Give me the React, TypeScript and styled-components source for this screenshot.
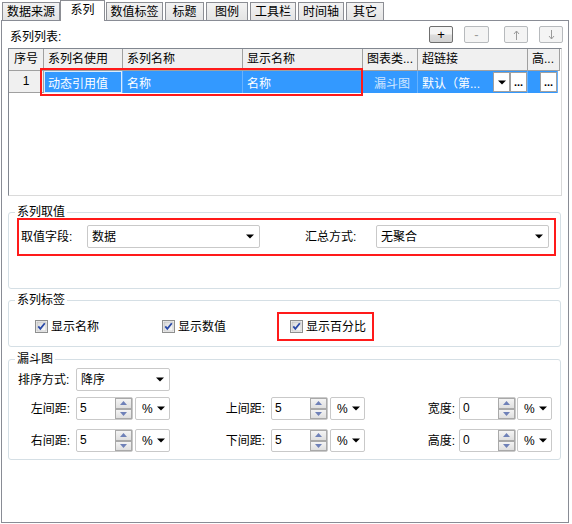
import React from 'react';
import styled, { createGlobalStyle } from 'styled-components';

const GlobalStyle = createGlobalStyle`
  html, body {
    margin: 0;
    padding: 0;
    background: #ffffff;
  }
  body {
    font-family: "Liberation Sans", "Noto Sans CJK SC", sans-serif;
    font-size: 12px;
    color: #000000;
  }
`;

const Window = styled.div`
  width: 572px;
  height: 524px;
  background: #ffffff;
  overflow: hidden;
`;

const TabStrip = styled.div`
  position: relative;
  z-index: 1;
  display: flex;
  align-items: flex-end;
  height: 20px;
  padding-left: 2px;
`;

const Tab = styled.div<{ $w: number; $active?: boolean }>`
  box-sizing: border-box;
  width: ${(p) => p.$w}px;
  height: ${(p) => (p.$active ? 21 : 18)}px;
  margin: 0 ${(p) => (p.$active ? 1 : 2)}px ${(p) => (p.$active ? -1 : 0)}px
    ${(p) => (p.$active ? -2 : 0)}px;
  border: 1px solid #8c8e94;
  border-bottom: none;
  background: ${(p) =>
    p.$active ? '#ffffff' : 'linear-gradient(#f3f3f3, #e4e4e4)'};
  display: flex;
  align-items: center;
  justify-content: center;
  line-height: 14px;
  white-space: nowrap;
  padding-bottom: ${(p) => (p.$active ? 2 : 0)}px;
`;

const Panel = styled.div`
  box-sizing: border-box;
  width: 568px;
  height: 503px;
  margin-left: 1px;
  border: 1px solid #898c95;
  background: #ffffff;
  padding: 4px 5px 0 6px;
`;

const ListHeader = styled.div`
  display: flex;
  align-items: flex-start;
  height: 23px;
`;

const Caption = styled.span<{ $w?: number; $right?: boolean }>`
  display: inline-block;
  flex: none;
  width: ${(p) => (p.$w ? `${p.$w}px` : 'auto')};
  text-align: ${(p) => (p.$right ? 'right' : 'left')};
  line-height: 14px;
  white-space: nowrap;
`;

const ListTitle = styled(Caption)`
  margin-top: 5px;
  margin-left: 2px;
`;

const ToolButton = styled.div<{ $gap: number; $w: number; $enabled?: boolean }>`
  box-sizing: border-box;
  width: ${(p) => p.$w}px;
  height: 17px;
  margin-top: 1px;
  margin-left: ${(p) => p.$gap}px;
  border: 1px solid ${(p) => (p.$enabled ? '#6f6f6f' : '#b7babd')};
  border-radius: 2px;
  background: ${(p) =>
    p.$enabled ? 'linear-gradient(#f4f4f4 45%, #dcdcdc 55%, #d2d2d2)' : '#f4f4f4'};
  color: ${(p) => (p.$enabled ? '#000' : '#9a9a9a')};
  display: flex;
  align-items: center;
  justify-content: center;
  font-size: 13px;
  line-height: 13px;
`;

const Spacer = styled.div`
  flex: 1;
`;

const Table = styled.div`
  position: relative;
  box-sizing: border-box;
  width: 554px;
  height: 148px;
  border: 1px solid;
  border-color: #828790 #dadada #dadada #828790;
  background: #ffffff;
`;

const TableRow = styled.div`
  display: flex;
  height: 22px;
`;

const HeadCell = styled.div<{ $w: number; $center?: boolean }>`
  box-sizing: border-box;
  flex: none;
  width: ${(p) => p.$w}px;
  padding: 0 4px;
  border-right: 1px solid #a0a0a0;
  border-bottom: 1px solid #a0a0a0;
  background: #f0f0f0;
  line-height: 21px;
  text-align: ${(p) => (p.$center ? 'center' : 'left')};
  white-space: nowrap;
  overflow: hidden;
`;

const IndexCell = styled(HeadCell)`
  padding: 0 3px;
`;

const DataCell = styled.div<{ $w: number; $focus?: boolean; $dim?: boolean }>`
  box-sizing: border-box;
  flex: none;
  width: ${(p) => p.$w}px;
  display: flex;
  align-items: center;
  padding-left: 4px;
  background: #3399ff;
  color: ${(p) => (p.$dim ? '#cfe6ff' : '#ffffff')};
  justify-content: ${(p) => (p.$dim ? 'center' : 'flex-start')};
  border-right: 1px solid rgba(255, 255, 255, 0.25);
  box-shadow: ${(p) => (p.$focus ? 'inset 0 0 0 1px #d8ecff' : 'none')};
  white-space: nowrap;
  overflow: hidden;
`;

const CellText = styled.span`
  flex: 1;
  overflow: hidden;
`;

const CellButton = styled.div`
  box-sizing: border-box;
  flex: none;
  width: 17px;
  height: 20px;
  border: 1px solid #a0a0a0;
  background: #ffffff;
  color: #000000;
  display: flex;
  align-items: center;
  justify-content: center;
  font-size: 11px;
  line-height: 11px;
  font-weight: bold;
`;

const Marker = styled.div`
  position: absolute;
  left: 31px;
  top: 19px;
  width: 323px;
  height: 28px;
  box-sizing: border-box;
  border: 2px solid #ff1a1a;
  pointer-events: none;
`;

const Group = styled.fieldset<{ $top: number }>`
  box-sizing: border-box;
  width: 553px;
  margin: ${(p) => p.$top}px 0 0 0;
  padding: 0;
  border: 1px solid #d5dfe5;
  border-radius: 3px;
  min-width: 0;
`;

const Legend = styled.legend`
  margin-left: 6px;
  padding: 0 2px;
  font-size: 12px;
  line-height: 14px;
`;

const Highlight = styled.div`
  box-sizing: border-box;
  border: 2px solid #ff1a1a;
`;

const ValueHighlight = styled(Highlight)`
  display: flex;
  align-items: center;
  width: 539px;
  height: 38px;
  margin: -1px 0 32px 8px;
  padding: 0 5px 1px 2px;
`;

const Combo = styled.div<{ $w: number; $gap?: number }>`
  box-sizing: border-box;
  flex: none;
  width: ${(p) => p.$w}px;
  height: 23px;
  margin-left: ${(p) => p.$gap ?? 0}px;
  border: 1px solid #c9c9c9;
  border-radius: 2px;
  background: #ffffff;
  display: flex;
  align-items: center;
  padding: 0 5px 0 4px;
`;

const ComboText = styled.span`
  flex: 1;
  line-height: 14px;
  white-space: nowrap;
`;

const CheckRow = styled.div`
  display: grid;
  grid-template-columns: 127px 115px auto;
  align-items: center;
  height: 29px;
  margin: 5px 0 5px 26px;
`;

const CheckItem = styled.label`
  display: flex;
  align-items: center;
  gap: 3px;
  line-height: 14px;
  white-space: nowrap;
`;

const PercentHighlight = styled(Highlight)`
  display: flex;
  align-items: center;
  width: 97px;
  height: 29px;
  padding-left: 11px;
`;

const FormRow = styled.div<{ $top: number; $bottom?: number }>`
  display: flex;
  align-items: center;
  height: 23px;
  margin: ${(p) => p.$top}px 0 ${(p) => p.$bottom ?? 0}px 0;
`;

const SortCaption = styled(Caption)`
  margin-left: 9px;
`;

const Field = styled.div`
  display: flex;
  align-items: center;
`;

const FieldCaption = styled(Caption)<{ $gap: number }>`
  margin-right: ${(p) => p.$gap}px;
`;

const SpinBox = styled.div`
  box-sizing: border-box;
  display: flex;
  width: 57px;
  height: 23px;
  padding: 0 0 0 3px;
  border: 1px solid #c9c9c9;
  border-radius: 2px;
  background: #ffffff;
`;

const SpinValue = styled.span`
  flex: 1;
  padding-top: 3px;
  line-height: 14px;
`;

const SpinButtons = styled.div`
  display: flex;
  flex-direction: column;
  width: 17px;
`;

const SpinButton = styled.div`
  box-sizing: border-box;
  flex: 1;
  border: 1px solid #a9a9a9;
  background: linear-gradient(#f4f4f4, #dfdfdf);
  display: flex;
  align-items: center;
  justify-content: center;
`;

const UnitCombo = styled(Combo)`
  padding: 0 4px 0 6px;
`;

const Caret = () => (
  <svg width="8" height="5" viewBox="0 0 8 5">
    <path d="M0 0.5h8L4 4.5z" fill="#000" />
  </svg>
);

const Arrow = ({ up }: { up?: boolean }) => (
  <svg width="7" height="10" viewBox="0 0 7 10">
    {up ? (
      <path d="M3.5 1v9M1 4l2.5-3L6 4" stroke="#9a9a9a" fill="none" strokeWidth="1" />
    ) : (
      <path d="M3.5 0v9M1 6l2.5 3L6 6" stroke="#9a9a9a" fill="none" strokeWidth="1" />
    )}
  </svg>
);

const SpinGlyph = ({ up }: { up?: boolean }) => (
  <svg width="7" height="4" viewBox="0 0 7 4">
    {up ? <path d="M0 4h7L3.5 0z" fill="#6f81b8" /> : <path d="M0 0h7L3.5 4z" fill="#6f81b8" />}
  </svg>
);

const CheckBox = () => (
  <svg width="13" height="13" viewBox="0 0 13 13">
    <defs>
      <linearGradient id="cbg" x1="0" y1="0" x2="1" y2="1">
        <stop offset="0" stopColor="#d6d6d6" />
        <stop offset="1" stopColor="#ffffff" />
      </linearGradient>
    </defs>
    <rect x="0.5" y="0.5" width="12" height="12" fill="#f4f4f4" stroke="#8e8f8f" />
    <rect x="2" y="2" width="9" height="9" fill="url(#cbg)" stroke="#b5b5b5" strokeWidth="0.6" />
    <path d="M3.3 6.4l2 2.4L9.8 3.2" stroke="#2a4aa8" strokeWidth="1.8" fill="none" />
  </svg>
);

const tabs = [
  { label: '数据来源', w: 58 },
  { label: '系列', w: 45, active: true },
  { label: '数值标签', w: 57 },
  { label: '标题', w: 39 },
  { label: '图例', w: 42 },
  { label: '工具栏', w: 46 },
  { label: '时间轴', w: 46 },
  { label: '其它', w: 38 },
];

const columns = [
  { label: '序号', w: 35, center: true },
  { label: '系列名使用', w: 79 },
  { label: '系列名称', w: 120 },
  { label: '显示名称', w: 120 },
  { label: '图表类...', w: 55 },
  { label: '超链接', w: 110 },
  { label: '高...', w: 32 },
];

interface MarginFieldProps {
  label: string;
  value: string;
  labelWidth: number;
  gap: number;
  unitGap: number;
}

function MarginField({ label, value, labelWidth, gap, unitGap }: MarginFieldProps) {
  return (
    <Field>
      <FieldCaption $w={labelWidth} $right $gap={gap}>
        {label}
      </FieldCaption>
      <SpinBox>
        <SpinValue>{value}</SpinValue>
        <SpinButtons>
          <SpinButton>
            <SpinGlyph up />
          </SpinButton>
          <SpinButton>
            <SpinGlyph />
          </SpinButton>
        </SpinButtons>
      </SpinBox>
      <UnitCombo $w={35} $gap={unitGap}>
        <ComboText>%</ComboText>
        <Caret />
      </UnitCombo>
    </Field>
  );
}

export default function App() {
  return (
    <Window>
      <GlobalStyle />
      <TabStrip>
        {tabs.map((t) => (
          <Tab key={t.label} $w={t.w} $active={t.active}>
            {t.label}
          </Tab>
        ))}
      </TabStrip>
      <Panel>
        <ListHeader>
          <ListTitle>系列列表:</ListTitle>
          <Spacer />
          <ToolButton $gap={0} $w={24} $enabled>
            +
          </ToolButton>
          <ToolButton $gap={11} $w={25}>
            -
          </ToolButton>
          <ToolButton $gap={15} $w={24}>
            <Arrow up />
          </ToolButton>
          <ToolButton $gap={11} $w={24}>
            <Arrow />
          </ToolButton>
        </ListHeader>

        <Table>
          <TableRow>
            {columns.map((c) => (
              <HeadCell key={c.label} $w={c.w} $center={c.center}>
                {c.label}
              </HeadCell>
            ))}
          </TableRow>
          <TableRow>
            <IndexCell $w={35} $center>
              1
            </IndexCell>
            <DataCell $w={79} $focus>
              动态引用值
            </DataCell>
            <DataCell $w={120}>名称</DataCell>
            <DataCell $w={120}>名称</DataCell>
            <DataCell $w={55} $dim>
              漏斗图
            </DataCell>
            <DataCell $w={110}>
              <CellText>默认（第...</CellText>
              <CellButton>
                <Caret />
              </CellButton>
              <CellButton>...</CellButton>
            </DataCell>
            <DataCell $w={30}>
              <CellText />
              <CellButton>...</CellButton>
            </DataCell>
          </TableRow>
          <Marker />
        </Table>

        <Group $top={9}>
          <Legend>系列取值</Legend>
          <ValueHighlight>
            <Caption $w={66}>取值字段:</Caption>
            <Combo $w={173}>
              <ComboText>数据</ComboText>
              <Caret />
            </Combo>
            <Caption $w={71} style={{ marginLeft: 45 }}>
              汇总方式:
            </Caption>
            <Combo $w={173}>
              <ComboText>无聚合</ComboText>
              <Caret />
            </Combo>
          </ValueHighlight>
        </Group>

        <Group $top={4}>
          <Legend>系列标签</Legend>
          <CheckRow>
            <CheckItem>
              <CheckBox />
              显示名称
            </CheckItem>
            <CheckItem>
              <CheckBox />
              显示数值
            </CheckItem>
            <PercentHighlight>
              <CheckItem>
                <CheckBox />
                显示百分比
              </CheckItem>
            </PercentHighlight>
          </CheckRow>
        </Group>

        <Group $top={5}>
          <Legend>漏斗图</Legend>
          <FormRow $top={2}>
            <SortCaption $w={58}>排序方式:</SortCaption>
            <Combo $w={94}>
              <ComboText>降序</ComboText>
              <Caret />
            </Combo>
          </FormRow>
          <FormRow $top={6}>
            <MarginField label="左间距:" value="5" labelWidth={61} gap={6} unitGap={2} />
            <MarginField label="上间距:" value="5" labelWidth={95} gap={6} unitGap={2} />
            <MarginField label="宽度:" value="0" labelWidth={90} gap={4} unitGap={1} />
          </FormRow>
          <FormRow $top={9} $bottom={7}>
            <MarginField label="右间距:" value="5" labelWidth={61} gap={6} unitGap={2} />
            <MarginField label="下间距:" value="5" labelWidth={95} gap={6} unitGap={2} />
            <MarginField label="高度:" value="0" labelWidth={90} gap={4} unitGap={1} />
          </FormRow>
        </Group>
      </Panel>
    </Window>
  );
}
